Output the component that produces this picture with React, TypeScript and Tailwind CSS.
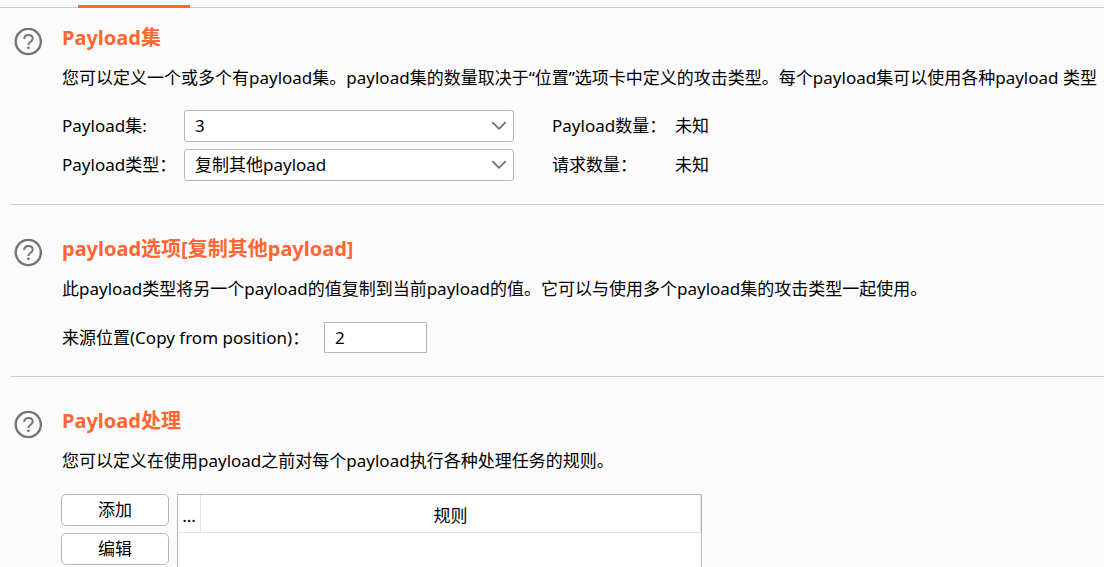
import type { ReactNode } from "react";

function HelpIcon() {
  return (
    <svg viewBox="0 0 28 28" className="size-7 shrink-0" fill="none" aria-hidden="true">
      <circle cx="14.3" cy="13.5" r="12.6" stroke="#757575" strokeWidth="2.4" />
      <path
        d="M10.2 11C10.2 8.5 12 7.1 14.4 7.1C16.9 7.1 18.7 8.5 18.7 10.6C18.7 12.2 17.8 13.1 16.4 14C15 14.9 14.4 15.5 14.4 16.7V17.1"
        stroke="#757575"
        strokeWidth="2"
      />
      <circle cx="14.4" cy="19.8" r="1.4" fill="#757575" />
    </svg>
  );
}

function Chevron() {
  return (
    <svg
      viewBox="0 0 16 10"
      className="pointer-events-none absolute top-[11px] right-[7px] h-[10px] w-4"
      fill="none"
      aria-hidden="true"
    >
      <path d="M1.3 1.2L8 7.9L14.7 1.2" stroke="#6e6e6e" strokeWidth="1.7" />
    </svg>
  );
}

function Section({ title, text, children }: { title: string; text: string; children: ReactNode }) {
  return (
    <section className="ml-[10px] flex gap-5 border-b border-[#cdcdcd] pt-[30px] pb-[23px] pl-1 first:pt-4 last:border-b-0">
      <button type="button" aria-label="帮助" className="mt-1 size-7 shrink-0">
        <HelpIcon />
      </button>
      <div className="min-w-0 flex-1">
        <h2 className="text-xl leading-7 font-bold text-[#ff6633]">{title}</h2>
        <p className="mt-[14px] mb-5 overflow-hidden leading-6 whitespace-nowrap">{text}</p>
        {children}
      </div>
    </section>
  );
}

function Select({ id, value }: { id: string; value: string }) {
  return (
    <div className="relative">
      <select
        id={id}
        defaultValue={value}
        className="h-8 w-full appearance-none rounded-[3px] border border-[#bbb4b4] bg-white pr-8 pl-[10px]"
      >
        <option>{value}</option>
      </select>
      <Chevron />
    </div>
  );
}

function ActionButton({ children }: { children: ReactNode }) {
  return (
    <button type="button" className="h-8 w-full shrink-0 rounded-[5px] border border-[#bbb4b4] bg-white">
      {children}
    </button>
  );
}

export default function App() {
  return (
    <div className="h-screen overflow-hidden bg-[#fbfbfb] font-['Noto_Sans','Noto_Sans_CJK_SC',sans-serif] text-[17px] leading-6 text-black">
      <header className="flex h-2 items-end border-b border-[#cdcdcd] pl-[78px]">
        <div className="-mb-px h-[3px] w-[112px] bg-[#ff6633]" />
      </header>
      <main>
        <Section
          title="Payload集"
          text="您可以定义一个或多个有payload集。payload集的数量取决于“位置”选项卡中定义的攻击类型。每个payload集可以使用各种payload 类型"
        >
          <div className="grid grid-cols-[122px_330px_123px_auto] items-center justify-start gap-y-[7px] whitespace-nowrap">
            <label htmlFor="payload-set">Payload集:</label>
            <Select id="payload-set" value="3" />
            <span className="pl-[38px]">Payload数量：</span>
            <span className="pl-[38px]">未知</span>
            <label htmlFor="payload-type">Payload类型：</label>
            <Select id="payload-type" value="复制其他payload" />
            <span className="pl-[38px]">请求数量：</span>
            <span className="pl-[38px]">未知</span>
          </div>
        </Section>
        <Section
          title="payload选项[复制其他payload]"
          text="此payload类型将另一个payload的值复制到当前payload的值。它可以与使用多个payload集的攻击类型一起使用。"
        >
          <div className="flex items-center pt-px">
            <label htmlFor="position" className="w-[262px] whitespace-nowrap">
              来源位置(Copy from position)：
            </label>
            <input
              id="position"
              type="text"
              defaultValue="2"
              className="h-[31px] w-[103px] border border-[#bbb4b4] bg-white px-[10px]"
            />
          </div>
        </Section>
        <Section title="Payload处理" text="您可以定义在使用payload之前对每个payload执行各种处理任务的规则。">
          <div className="flex gap-2 pt-px">
            <div className="-ml-px flex w-[108px] flex-col gap-[7px]">
              <ActionButton>添加</ActionButton>
              <ActionButton>编辑</ActionButton>
            </div>
            <div className="h-40 w-[525px] border border-[#bbb4b4] bg-white">
              <table className="w-full table-fixed border-separate border-spacing-0">
                <thead>
                  <tr className="h-[38px]">
                    <th scope="col" className="w-[23px] border-r border-b border-[#e2e2e2] pt-1 font-normal">
                      ...
                    </th>
                    <th scope="col" className="border-r border-b border-[#e2e2e2] pt-1 font-normal">
                      规则
                    </th>
                  </tr>
                </thead>
              </table>
            </div>
          </div>
        </Section>
      </main>
    </div>
  );
}
